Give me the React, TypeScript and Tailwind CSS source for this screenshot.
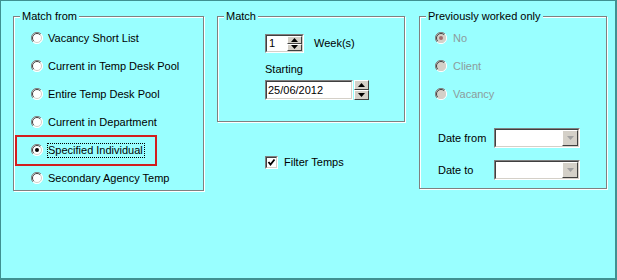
import React from "react";

const Radio = ({ checked = false, disabled = false }: { checked?: boolean; disabled?: boolean }) => (
  <svg width="12" height="12" viewBox="0 0 12 12" className="shrink-0">
    <circle cx="6" cy="6" r="5.5" fill={disabled ? "#d4d0c8" : "#ffffff"} />
    <path d="M10 2 A5.5 5.5 0 0 0 2 10" fill="none" stroke="#808080" strokeWidth="1" />
    <path d="M9.2 2.8 A4.5 4.5 0 0 0 2.8 9.2" fill="none" stroke="#404040" strokeWidth="1" />
    <path d="M2 10 A5.5 5.5 0 0 0 10 2" fill="none" stroke="#ffffff" strokeWidth="1" />
    <path d="M2.8 9.2 A4.5 4.5 0 0 0 9.2 2.8" fill="none" stroke="#d4d0c8" strokeWidth="1" />
    {checked && <circle cx="6" cy="6" r="2" fill={disabled ? "#a07070" : "#000000"} />}
  </svg>
);

const Group = ({ label, className, children }: { label: string; className: string; children: React.ReactNode }) => (
  <div className={`relative border border-[#808080] shadow-[inset_1px_1px_0_#ffffff,1px_1px_0_#ffffff] ${className}`}>
    <span className="absolute -top-[8px] left-[6px] bg-[#99ffff] px-[2px] leading-[14px]">{label}</span>
    {children}
  </div>
);

const Sunken = ({ className, children }: { className: string; children?: React.ReactNode }) => (
  <div className={`flex bg-white border border-t-[#808080] border-l-[#808080] border-b-white border-r-white ${className}`}>
    <div className="flex flex-1 border border-t-[#404040] border-l-[#404040] border-b-[#d4d0c8] border-r-[#d4d0c8]">
      {children}
    </div>
  </div>
);

const Arrow = ({ up, color = "#000" }: { up?: boolean; color?: string }) => (
  <svg width="7" height="4" viewBox="0 0 7 4">
    <path d={up ? "M3.5 0 L7 4 L0 4 Z" : "M0 0 L7 0 L3.5 4 Z"} fill={color} />
  </svg>
);

const Btn = ({ className, children }: { className: string; children: React.ReactNode }) => (
  <div className={`flex items-center justify-center bg-[#d4d0c8] border border-t-white border-l-white border-b-[#404040] border-r-[#404040] ${className}`}>
    {children}
  </div>
);

const Spin = () => (
  <div className="flex flex-col w-[15px] shrink-0">
    <Btn className="h-1/2"><Arrow up /></Btn>
    <Btn className="h-1/2"><Arrow /></Btn>
  </div>
);

const matchFrom = [
  "Vacancy Short List",
  "Current in Temp Desk Pool",
  "Entire Temp Desk Pool",
  "Current in Department",
  "Specified Individual",
  "Secondary Agency Temp",
];

export default function App() {
  return (
    <div
      className="w-[617px] h-[280px] bg-[#99ffff] border-l border-t border-r-2 border-b-2 border-[#3f9191] text-[11px] text-black flex items-start pl-[12px] pt-[15px]"
      style={{ fontFamily: '"Liberation Sans", Arial, sans-serif' }}
    >
      <Group label="Match from" className="w-[191px] h-[175px] pt-[7px] pl-[17px]">
        {matchFrom.map((t, i) => (
          <div key={t} className="h-[28px] flex items-center gap-[5px]">
            <Radio checked={i === 4} />
            {i === 4 ? (
              <span className="relative outline-1 outline-dotted outline-black leading-[13px] pr-[1px]">
                {t}
                <span className="absolute -left-[33px] -top-[9px] w-[142px] h-[31px] border-2 border-[#d21e1e]" />
              </span>
            ) : (
              <span>{t}</span>
            )}
          </div>
        ))}
      </Group>

      <div className="ml-[13px] flex flex-col">
        <Group label="Match" className="w-[188px] h-[106px] pt-[17px] pl-[47px]">
          <div className="flex items-center">
            <Sunken className="w-[39px] h-[19px]">
              <span className="flex-1 pl-[2px] leading-[15px]">1</span>
              <Spin />
            </Sunken>
            <span className="ml-[10px]">Week(s)</span>
          </div>
          <div className="mt-[10px] leading-[13px]">Starting</div>
          <div className="flex mt-[4px] w-[104px] h-[20px]">
            <Sunken className="w-[88px] h-[20px]">
              <span className="pl-[1px] leading-[16px]">25/06/2012</span>
            </Sunken>
            <div className="ml-[1px] flex flex-col w-[15px] h-[20px]">
              <Btn className="h-1/2"><Arrow up /></Btn>
              <Btn className="h-1/2"><Arrow /></Btn>
            </div>
          </div>
        </Group>
        <div className="mt-[32px] pl-[48px] flex items-center gap-[6px]">
          <div className="w-[13px] h-[13px] bg-white border border-t-[#808080] border-l-[#808080] border-b-white border-r-white">
            <div className="w-full h-full border border-t-[#404040] border-l-[#404040] border-b-[#d4d0c8] border-r-[#d4d0c8]">
              <svg width="9" height="9" viewBox="0 0 9 9">
                <path d="M1.5 4 L3.5 6.5 L7.5 1.5" fill="none" stroke="#000" strokeWidth="1.8" />
              </svg>
            </div>
          </div>
          <span>Filter Temps</span>
        </div>
      </div>

      <Group label="Previously worked only" className="ml-[14px] w-[188px] h-[173px] pt-[7px] pl-[15px]">
        {["No", "Client", "Vacancy"].map((t, i) => (
          <div key={t} className="h-[28px] flex items-center gap-[6px] text-[#8c9c9c]">
            <Radio checked={i === 0} disabled />
            <span>{t}</span>
          </div>
        ))}
        <div className="mt-[20px] flex items-center pl-[3px]">
          <span className="w-[56px]">Date from</span>
          <Sunken className="w-[86px] h-[20px]">
            <span className="flex-1" />
            <Btn className="w-[16px]"><Arrow color="#a0a0a0" /></Btn>
          </Sunken>
        </div>
        <div className="mt-[12px] flex items-center pl-[3px]">
          <span className="w-[56px]">Date to</span>
          <Sunken className="w-[86px] h-[20px]">
            <span className="flex-1" />
            <Btn className="w-[16px]"><Arrow color="#a0a0a0" /></Btn>
          </Sunken>
        </div>
      </Group>
    </div>
  );
}
